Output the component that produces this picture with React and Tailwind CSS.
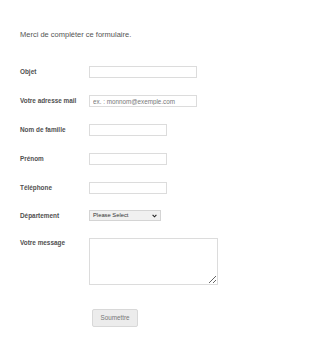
import React from "react";

const labelCls = "w-[69px] shrink-0 text-[6.4px] font-bold text-[#4f4f4f] leading-[8px]";
const inputCls = "h-[12px] border border-[#dcdcdc] bg-white outline-none";

function Row({ label, mt, children }) {
  return (
    <div className={`flex items-center ${mt}`}>
      <div className={labelCls}>{label}</div>
      {children}
    </div>
  );
}

export default function App() {
  return (
    <div className="w-[310px] h-[344px] bg-white font-['Liberation_Sans',Arial,sans-serif] pl-[20px] pt-[30px] overflow-hidden">
      <div className="text-[7.5px] leading-[10px] text-[#555]">Merci de compléter ce formulaire.</div>

      <Row label="Objet" mt="mt-[26px]">
        <input className={`${inputCls} w-[108px]`} />
      </Row>
      <Row label="Votre adresse mail" mt="mt-[17px]">
        <input
          className={`${inputCls} w-[108px] px-[3px] text-[6.3px] placeholder:text-[#777]`}
          placeholder="ex. : monnom@exemple.com"
        />
      </Row>
      <Row label="Nom de famille" mt="mt-[17px]">
        <input className={`${inputCls} w-[78px]`} />
      </Row>
      <Row label="Prénom" mt="mt-[17px]">
        <input className={`${inputCls} w-[78px]`} />
      </Row>
      <Row label="Téléphone" mt="mt-[17px]">
        <input className={`${inputCls} w-[78px]`} />
      </Row>
      <Row label="Département" mt="mt-[16px]">
        <div className="relative w-[72px] h-[11px] border border-[#d4d4d4] bg-[#f0f0f0] flex items-center pl-[3px]">
          <span className="text-[5.8px] text-[#333] leading-[7px]">Please Select</span>
          <svg className="absolute right-[3px] top-[3px]" width="5" height="4" viewBox="0 0 5 4">
            <path d="M0.6 0.8 L2.5 2.8 L4.4 0.8" fill="none" stroke="#222" strokeWidth="1.1" />
          </svg>
        </div>
      </Row>
      <div className="flex items-start mt-[17px]">
        <div className={`${labelCls} mt-[1px]`}>Votre message</div>
        <textarea className="w-[129px] h-[47px] border border-[#dcdcdc] bg-white outline-none" />
      </div>
      <div className="flex pl-[72px] mt-[24px]">
        <button className="w-[46px] h-[18px] rounded-[2px] border border-[#d8d8d8] bg-[#ececec] text-[6.3px] text-[#777] leading-none">
          Soumettre
        </button>
      </div>
    </div>
  );
}
